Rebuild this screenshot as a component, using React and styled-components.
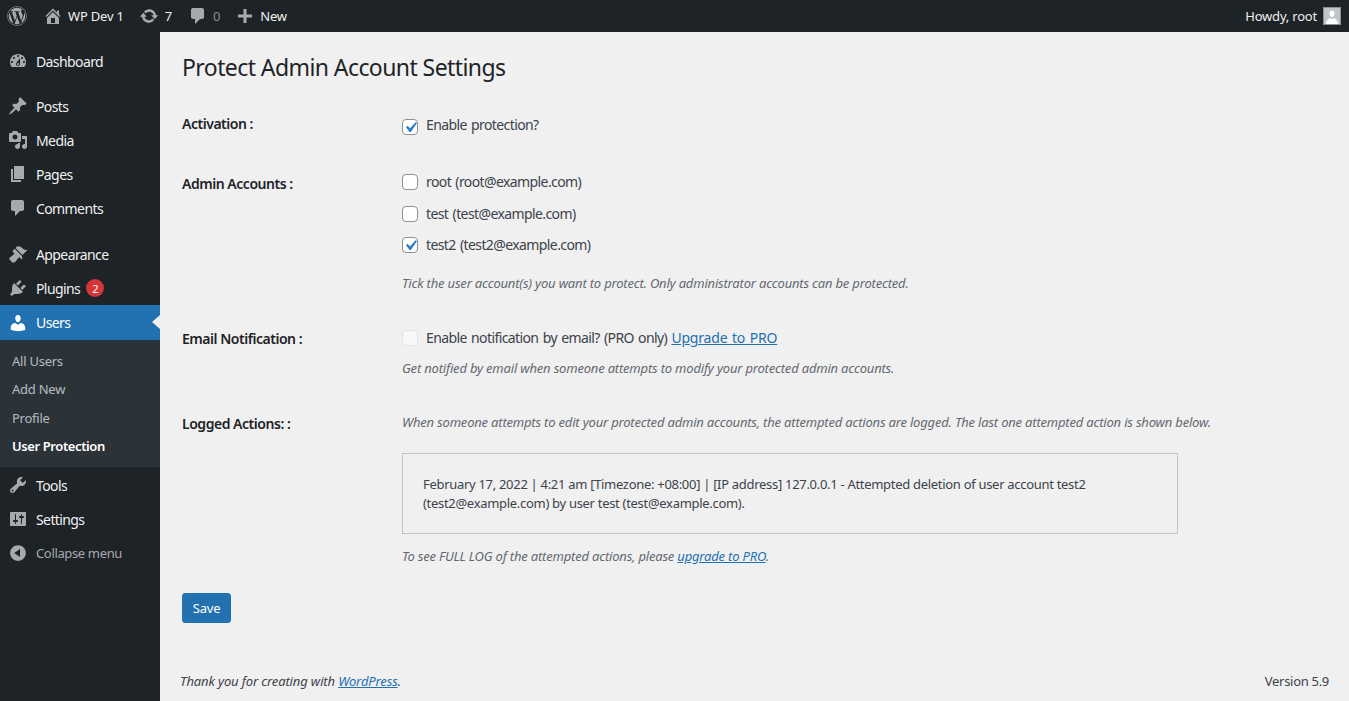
import styled, { createGlobalStyle } from "styled-components";
import { FaWordpress } from "react-icons/fa";

const P = {
  dashboard: "M3.76 16h12.48c1.1-1.37 1.76-3.11 1.76-5 0-4.42-3.58-8-8-8s-8 3.58-8 8c0 1.89.66 3.63 1.76 5zM10 4c.55 0 1 .45 1 1s-.45 1-1 1-1-.45-1-1 .45-1 1-1zM6 6c.55 0 1 .45 1 1s-.45 1-1 1-1-.45-1-1 .45-1 1-1zm8 0c.55 0 1 .45 1 1s-.45 1-1 1-1-.45-1-1 .45-1 1-1zm-5.37 5.55L12 7v6c0 1.1-.9 2-2 2s-2-.9-2-2c0-.57.24-1.08.63-1.45zM4 10c.55 0 1 .45 1 1s-.45 1-1 1-1-.45-1-1 .45-1 1-1zm12 0c.55 0 1 .45 1 1s-.45 1-1 1-1-.45-1-1 .45-1 1-1zm-5 3c0-.55-.45-1-1-1s-1 .45-1 1 .45 1 1 1 1-.45 1-1z",
  posts: "M10.44 3.02l1.82-1.82 6.36 6.35-1.83 1.82c-1.05-.68-2.48-.57-3.41.36l-.75.75c-.92.93-1.04 2.35-.35 3.41l-1.83 1.82-2.41-2.41-2.8 2.79c-.42.42-3.38 2.71-3.8 2.29s1.86-3.39 2.28-3.81l2.79-2.79L4.1 9.36l1.83-1.82c1.05.69 2.48.57 3.4-.36l.75-.75c.93-.92 1.05-2.35.36-3.41z",
  media: "M13 11V4c0-.55-.45-1-1-1h-1.67L9 1H5L3.67 3H2c-.55 0-1 .45-1 1v7c0 .55.45 1 1 1h10c.55 0 1-.45 1-1zM7 4.5c1.38 0 2.5 1.12 2.5 2.5S8.38 9.5 7 9.5 4.5 8.38 4.5 7 5.62 4.5 7 4.5zM14 6h5v10.5c0 1.38-1.12 2.5-2.5 2.5S14 17.88 14 16.5s1.12-2.5 2.5-2.5c.17 0 .34.02.5.05V9h-3V6zm-4 8.05V13h2v3.5c0 1.38-1.12 2.5-2.5 2.5S7 17.88 7 16.5 8.12 14 9.5 14c.17 0 .34.02.5.05z",
  pages: "M6 15V2h10v13H6zm-1 1h8v2H3V5h2v11z",
  comments: "M5 2h9c1.1 0 2 .9 2 2v7c0 1.1-.9 2-2 2h-2l-5 5v-5H5c-1.1 0-2-.9-2-2V4c0-1.1.9-2 2-2z",
  appearance: "M14.48 11.06L7.41 3.99l1.5-1.5c.5-.56 2.3-.47 3.51.32 1.21.8 1.43 1.28 2.91 2.1 1.18.64 2.45 1.26 4.45.85zm-.71.71L6.7 4.7 4.93 6.47c-.39.39-.39 1.02 0 1.41l1.06 1.06c.39.39.39 1.03 0 1.42-.6.6-1.43 1.11-2.21 1.69-.35.26-.7.53-1.01.84C1.43 13.43 1 14 1.5 15.5l3 3c1.5.5 2-.1 3.5-1.5.31-.31.58-.66.84-1.01.58-.78 1.09-1.61 1.69-2.21.39-.39 1.03-.39 1.42 0l1.06 1.06c.39.39 1.02.39 1.41 0z",
  plugins: "M13.11 4.36L9.87 7.6 8 5.73l3.24-3.24c.35-.34 1.05-.2 1.56.32.52.51.66 1.21.31 1.55zm-8 1.77l.91-1.12 9.01 9.01-1.19.84c-.71.71-2.63 1.16-3.82 1.16H6.14L4.9 17.26c-.59.59-1.54.59-2.12 0-.59-.58-.59-1.53 0-2.12l1.24-1.24v-3.88c0-1.13.4-3.19 1.09-3.89zm7.26 3.97l3.24-3.24c.34-.35 1.04-.21 1.55.31.52.51.66 1.21.31 1.55l-3.24 3.25z",
  users: "M10 9.25c-2.27 0-2.73-3.44-2.73-3.44C7 4.02 7.82 2 9.97 2c2.16 0 2.98 2.02 2.71 3.81 0 0-.41 3.44-2.68 3.44zm0 2.57L12.72 10c2.39 0 4.52 2.33 4.52 4.53v2.49s-3.65 1.13-7.24 1.13c-3.65 0-7.24-1.13-7.24-1.13v-2.49c0-2.25 1.94-4.48 4.47-4.48z",
  tools: "M16.68 9.77c-1.34 1.34-3.3 1.67-4.95.99l-5.41 6.52c-.99.99-2.59.99-3.58 0s-.99-2.59 0-3.57l6.52-5.42c-.68-1.65-.35-3.61.99-4.95 1.28-1.28 3.12-1.62 4.72-1.06l-2.89 2.89 2.82 2.82 2.86-2.87c.53 1.58.18 3.39-1.08 4.65zM3.81 16.21c.4.39 1.04.39 1.43 0 .4-.4.4-1.04 0-1.43-.39-.4-1.03-.4-1.43 0-.39.39-.39 1.03 0 1.43z",
  settings: "M18 16V4c0-.55-.45-1-1-1H3c-.55 0-1 .45-1 1v12c0 .55.45 1 1 1h14c.55 0 1-.45 1-1zM8 11h1c.55 0 1 .45 1 1s-.45 1-1 1H8v1.5c0 .28-.22.5-.5.5s-.5-.22-.5-.5V13H6c-.55 0-1-.45-1-1s.45-1 1-1h1V5.5c0-.28.22-.5.5-.5s.5.22.5.5V11zm5-2h-1c-.55 0-1-.45-1-1s.45-1 1-1h1V5.5c0-.28.22-.5.5-.5s.5.22.5.5V7h1c.55 0 1 .45 1 1s-.45 1-1 1h-1v5.5c0 .28-.22.5-.5.5s-.5-.22-.5-.5V9z",
  collapse: "M10 2.16c4.33 0 7.84 3.51 7.84 7.84s-3.51 7.84-7.84 7.84S2.16 14.33 2.16 10 5.71 2.16 10 2.16zm2 11.72V6.12L6.18 9.97z",
  home: "M16 8.5l1.53 1.53-1.06 1.06L10 4.62l-6.47 6.47-1.06-1.06L10 2.5l4 4v-2h2v4zm-6-2.46l6 5.99V18H4v-5.97zM12 17v-5H8v5h4z",
  update: "M10.2 3.28c3.53 0 6.43 2.61 6.92 6h2.08l-3.5 4-3.5-4h2.32c-.45-1.97-2.21-3.45-4.32-3.45-1.45 0-2.73.71-3.54 1.78L4.95 5.66C6.23 4.2 8.11 3.28 10.2 3.28zm-.4 13.44c-3.52 0-6.43-2.61-6.92-6H.8l3.5-4c1.17 1.33 2.33 2.67 3.5 4H5.48c.45 1.97 2.21 3.45 4.32 3.45 1.45 0 2.73-.71 3.54-1.78l1.71 1.95c-1.28 1.46-3.15 2.38-5.25 2.38z",
  plus: "M17 8.5v3h-5.5V17h-3v-5.5H3v-3h5.5V3h3v5.500z",
};

const Global = createGlobalStyle`
  html, body { margin: 0; padding: 0; height: 100%; }
  body {
    background: #f0f0f1;
    color: #3c434a;
    font-family: "Noto Sans", "Open Sans", sans-serif;
    font-size: 13px;
    letter-spacing: -0.2px;
    overflow: hidden;
  }
`;

const Page = styled.div`
  width: 1349px;
  height: 701px;
  display: flex;
  flex-direction: column;
  overflow: hidden;
`;

const AdminBar = styled.header`
  height: 32px;
  flex: none;
  background: #1d2327;
  display: flex;
  align-items: center;
  justify-content: space-between;
  color: #f0f0f1;
  font-size: 13px;
`;

const BarGroup = styled.div`
  display: flex;
  align-items: center;
  height: 32px;
`;

const BarItem = styled.div`
  display: flex;
  align-items: center;
  gap: ${(p) => p.$gap ?? 5}px;
  margin-left: ${(p) => p.$left ?? 0}px;
  color: ${(p) => (p.$dim ? "#8c8f94" : "#f0f0f1")};
`;

const Howdy = styled.div`
  display: flex;
  align-items: center;
  gap: 6px;
  padding-right: 8px;
`;

const Avatar = styled.div`
  width: 16px;
  height: 16px;
  border: 1px solid #8c8f94;
  background: #c3c4c7;
  display: flex;
  overflow: hidden;
`;

const Body = styled.div`
  flex: 1;
  display: flex;
  min-height: 0;
`;

const Sidebar = styled.nav`
  width: 160px;
  flex: none;
  background: #1d2327;
  padding-top: 12px;
`;

const MenuItem = styled.div`
  position: relative;
  height: ${(p) => (p.$active ? 35 : 34)}px;
  display: flex;
  align-items: center;
  padding-left: 8px;
  gap: 8px;
  font-size: ${(p) => (p.$muted ? 13 : 14)}px;
  margin-top: ${(p) => p.$sep ?? 0}px;
  background: ${(p) => (p.$active ? "#2271b1" : "transparent")};
  color: ${(p) => (p.$active ? "#fff" : p.$muted ? "#a7aaad" : "#f0f0f1")};
  letter-spacing: ${(p) => (p.$muted ? -0.35 : -0.6)}px;
  svg {
    fill: ${(p) => (p.$active ? "#fff" : "#a7aaad")};
  }
`;

const Caret = styled.span`
  position: absolute;
  right: 0;
  top: 10px;
  border: 7px solid transparent;
  border-left-width: 0;
  border-right: 8px solid #f0f0f1;
`;

const Badge = styled.span`
  display: inline-flex;
  align-items: center;
  justify-content: center;
  width: 18px;
  height: 18px;
  border-radius: 50%;
  background: #d63638;
  color: #fff;
  font-size: 11px;
  margin-left: -2px;
`;

const SubMenu = styled.div`
  background: #2c3338;
  height: 127px;
  padding-top: 7px;
  box-sizing: border-box;
`;

const SubItem = styled.div`
  height: 28.3px;
  display: flex;
  align-items: center;
  padding-left: 12px;
  font-size: 13px;
  letter-spacing: ${(p) => (p.$current ? -0.4 : -0.25)}px;
  color: ${(p) => (p.$current ? "#fff" : "rgba(240,246,252,0.7)")};
  font-weight: ${(p) => (p.$current ? 600 : 400)};
`;

const Main = styled.main`
  flex: 1;
  min-width: 0;
  display: flex;
  flex-direction: column;
  padding: 0 20px 0 22px;
`;

const Title = styled.h1`
  margin: 0;
  padding-top: 19px;
  height: 49px;
  font-size: 23px;
  font-weight: 400;
  line-height: 32px;
  color: #1d2327;
  box-sizing: border-box;
  letter-spacing: -0.58px;
`;

const Row = styled.section`
  display: flex;
  margin-top: ${(p) => p.$top}px;
`;

const Label = styled.div`
  width: 220px;
  flex: none;
  font-size: 14px;
  font-weight: 600;
  line-height: 20px;
  color: #1d2327;
  letter-spacing: -0.47px;
  padding-top: ${(p) => p.$pad ?? 0}px;
`;

const Field = styled.div`
  flex: 1;
  min-width: 0;
`;

const Check = styled.label`
  display: flex;
  align-items: center;
  gap: 8px;
  height: 22px;
  font-size: 14px;
  line-height: 20px;
  letter-spacing: -0.6px;
  word-spacing: 1.2px;
  margin-bottom: ${(p) => p.$after ?? 0}px;
`;

const Box = styled.span`
  width: 14px;
  height: 14px;
  flex: none;
  border: 1px solid ${(p) => (p.$disabled ? "rgba(220,220,222,0.75)" : "#8c8f94")};
  border-radius: 4px;
  background: ${(p) => (p.$disabled ? "rgba(255,255,255,0.5)" : "#fff")};
  display: flex;
  align-items: center;
  justify-content: center;
  position: relative;
  top: ${(p) => p.$nudge ?? 0}px;
  svg {
    flex: none;
  }
`;

const Hint = styled.p`
  margin: ${(p) => p.$top ?? 0}px 0 0;
  font-size: 13px;
  font-style: italic;
  line-height: 20px;
  color: #646970;
  letter-spacing: -0.19px;
  white-space: nowrap;
`;

const LogBox = styled.div`
  width: 776px;
  height: 81px;
  margin-top: 21px;
  box-sizing: border-box;
  border: 1px solid #c3c4c7;
  padding: 21px 20px;
  font-size: 13px;
  line-height: 19px;
  color: #3c434a;
  letter-spacing: -0.3px;
`;

const Link = styled.a`
  color: #2271b1;
  text-decoration: underline;
  letter-spacing: ${(p) => p.$spacing ?? "inherit"};
`;

const SaveButton = styled.button`
  align-self: flex-start;
  margin-top: 27px;
  width: 49px;
  height: 30px;
  padding: 0;
  border: 1px solid #2271b1;
  border-radius: 3px;
  background: #2271b1;
  color: #fff;
  font: inherit;
  font-size: 13px;
  letter-spacing: -0.2px;
`;

const Footer = styled.footer`
  margin-top: auto;
  margin-left: -2px;
  height: 30px;
  display: flex;
  justify-content: space-between;
  font-size: 13px;
  line-height: 20px;
`;

const FooterNote = styled.span`
  font-style: italic;
  letter-spacing: -0.13px;
`;

const Version = styled.span`
  letter-spacing: -0.3px;
`;

function Dash({ d, size = 20, color }) {
  return (
    <svg width={size} height={size} viewBox="0 0 20 20" fill={color}>
      <path d={d} />
    </svg>
  );
}

function Tick() {
  return (
    <svg width="21" height="21" viewBox="0 0 20 20" fill="#2c7fc4">
      <path d="M14.83 4.89l1.34.94-5.81 8.38H9.02L5.78 9.67l1.34-1.25 2.57 2.4z" />
    </svg>
  );
}

const menuTop = [
  ["Posts", P.posts, 11],
  ["Media", P.media],
  ["Pages", P.pages],
  ["Comments", P.comments],
];

export default function App() {
  return (
    <Page>
      <Global />
      <AdminBar>
        <BarGroup>
          <BarItem $left={7}>
            <FaWordpress size={20} color="#a7aaad" />
          </BarItem>
          <BarItem $left={16}>
            <Dash d={P.home} color="#a7aaad" />
            <span>WP Dev 1</span>
          </BarItem>
          <BarItem $left={15} $gap={6}>
            <Dash d={P.update} color="#a7aaad" />
            <span>7</span>
          </BarItem>
          <BarItem $left={16} $gap={5} $dim>
            <Dash d={P.comments} color="#a7aaad" />
            <span>0</span>
          </BarItem>
          <BarItem $left={15} $gap={5}>
            <Dash d={P.plus} color="#a7aaad" />
            <span>New</span>
          </BarItem>
        </BarGroup>
        <Howdy>
          <span>Howdy, root</span>
          <Avatar>
            <svg width="16" height="16" viewBox="0 0 16 16" fill="#fff">
              <path d="M8 2.5c1.8 0 2.7 1.5 2.5 3.3C10.3 7.6 9.400 9 8 9S5.700 7.600 5.500 5.800C5.300 4 6.200 2.500 8 2.500zM2 16c0-3.500 2.500-5.500 4.200-6l1.800 1.200L9.800 10c1.700.5 4.200 2.500 4.200 6z" />
            </svg>
          </Avatar>
        </Howdy>
      </AdminBar>
      <Body>
        <Sidebar>
          <MenuItem>
            <Dash d={P.dashboard} />
            Dashboard
          </MenuItem>
          {menuTop.map(([name, d, sep]) => (
            <MenuItem key={name} $sep={sep}>
              <Dash d={d} />
              {name}
            </MenuItem>
          ))}
          <MenuItem $sep={12}>
            <Dash d={P.appearance} />
            Appearance
          </MenuItem>
          <MenuItem>
            <Dash d={P.plugins} />
            Plugins
            <Badge>2</Badge>
          </MenuItem>
          <MenuItem $active>
            <Dash d={P.users} />
            Users
            <Caret />
          </MenuItem>
          <SubMenu>
            <SubItem>All Users</SubItem>
            <SubItem>Add New</SubItem>
            <SubItem>Profile</SubItem>
            <SubItem $current>User Protection</SubItem>
          </SubMenu>
          <MenuItem $sep={1}>
            <Dash d={P.tools} />
            Tools
          </MenuItem>
          <MenuItem>
            <Dash d={P.settings} />
            Settings
          </MenuItem>
          <MenuItem $muted>
            <Dash d={P.collapse} />
            Collapse menu
          </MenuItem>
        </Sidebar>
        <Main>
          <Title>Protect Admin Account Settings</Title>
          <Row $top={33}>
            <Label>Activation :</Label>
            <Field>
              <Check>
                <Box $nudge={2}>
                  <Tick />
                </Box>
                Enable protection?
              </Check>
            </Field>
          </Row>
          <Row $top={35}>
            <Label $pad={3}>Admin Accounts :</Label>
            <Field>
              <Check $after={10}>
                <Box />
                root (root@example.com)
              </Check>
              <Check $after={9}>
                <Box />
                test (test@example.com)
              </Check>
              <Check>
                <Box>
                  <Tick />
                </Box>
                test2 (test2@example.com)
              </Check>
              <Hint $top={17}>Tick the user account(s) you want to protect. Only administrator accounts can be protected.</Hint>
            </Field>
          </Row>
          <Row $top={34}>
            <Label $pad={2}>Email Notification :</Label>
            <Field>
              <Check>
                <Box $disabled />
                <span>
                  Enable notification by email? (PRO only) <Link href="#" $spacing="-0.2px">Upgrade to PRO</Link>
                </span>
              </Check>
              <Hint $top={9}>Get notified by email when someone attempts to modify your protected admin accounts.</Hint>
            </Field>
          </Row>
          <Row $top={34}>
            <Label $pad={2}>Logged Actions: :</Label>
            <Field>
              <Hint>When someone attempts to edit your protected admin accounts, the attempted actions are logged. The last one attempted action is shown below.</Hint>
              <LogBox>
                February 17, 2022 | 4:21 am [Timezone: +08:00] | [IP address] 127.0.0.1 - Attempted deletion of user account test2 (test2@example.com) by user test (test@example.com).
              </LogBox>
              <Hint $top={12}>
                To see FULL LOG of the attempted actions, please <Link href="#">upgrade to PRO</Link>.
              </Hint>
            </Field>
          </Row>
          <SaveButton>Save</SaveButton>
          <Footer>
            <FooterNote>
              Thank you for creating with <Link href="#">WordPress</Link>.
            </FooterNote>
            <Version>Version 5.9</Version>
          </Footer>
        </Main>
      </Body>
    </Page>
  );
}
